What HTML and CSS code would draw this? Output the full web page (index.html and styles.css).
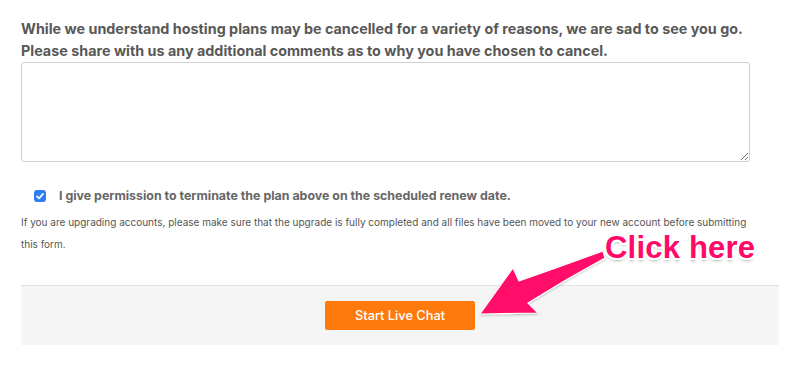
FILE: index.html
```html
<!DOCTYPE html>
<html>
<head>
<meta charset="utf-8">
<link rel="stylesheet" href="styles.css">
</head>
<body>
<div class="page">
  <form class="form">
    <p class="intro">While we understand hosting plans may be cancelled for a variety of reasons, we are sad to see you go.<br>Please share with us any additional comments as to why you have chosen to cancel.</p>
    <textarea class="comments"></textarea>
    <label class="consent">
      <span class="check"><svg width="12" height="12" viewBox="0 0 12 12"><path d="M3 6.3 L5.1 8.4 L9 3.9" fill="none" stroke="#fff" stroke-width="1.7" stroke-linecap="round" stroke-linejoin="round"/></svg></span>
      <span class="consent-text">I give permission to terminate the plan above on the scheduled renew date.</span>
    </label>
    <p class="note">If you are upgrading accounts, please make sure that the upgrade is fully completed and all files have been moved to your new account before submitting<br>this form.</p>
    <div class="footer">
      <button type="button" class="chat-btn">Start Live Chat</button>
    </div>
  </form>
  <div class="annotation">
    <svg class="arrow" width="809" height="366" viewBox="0 0 809 366">
      <defs>
        <filter id="sh" x="-20%" y="-20%" width="140%" height="140%">
          <feDropShadow dx="0" dy="1" stdDeviation="1.2" flood-color="#000" flood-opacity="0.25"/>
        </filter>
      </defs>
      <path d="M603,251 Q562,266 519,281 L513,268 L480,314 L538,313 L528,303 Q566,279 605,258 Z" fill="#ff0a68" stroke="#fff" stroke-width="1.2" stroke-linejoin="round" filter="url(#sh)"/>
    </svg>
    <span class="callout">Click here</span>
  </div>
</div>
</body>
</html>
```
FILE: styles.css
```css
html, body {
  margin: 0;
  padding: 0;
  background: #fff;
}
.page {
  position: relative;
  width: 809px;
  height: 366px;
  overflow: hidden;
}
.form {
  padding: 18px 30px 0 21px;
  font-family: Inter, "Liberation Sans", sans-serif;
  color: #555;
}
.intro {
  margin: 0;
  font-size: 14.35px;
  font-weight: 700;
  line-height: 22px;
  color: #585858;
}
.comments {
  display: block;
  box-sizing: border-box;
  width: 729px;
  height: 100px;
  margin: 0;
  border: 1px solid #cfcfcf;
  border-radius: 3px;
  resize: vertical;
}
.consent {
  display: flex;
  align-items: center;
  margin: 26px 0 0 13px;
}
.check {
  display: flex;
  align-items: center;
  justify-content: center;
  width: 12px;
  height: 12px;
  background: #2e7cf6;
  border-radius: 3px;
}
.consent-text {
  margin-left: 13px;
  font-size: 12.4px;
  font-weight: 700;
  color: #666;
}
.note {
  margin: 8px 0 0;
  font-size: 10px;
  line-height: 22px;
  color: #555;
  white-space: nowrap;
}
.footer {
  margin-top: 30px;
  width: 758px;
  height: 60px;
  box-sizing: border-box;
  background: #f5f5f5;
  border-top: 1px solid #e2e2e2;
  display: flex;
  justify-content: center;
  padding-top: 15px;
}
.chat-btn {
  width: 150px;
  height: 29px;
  background: #ff7a0c;
  border: none;
  border-radius: 2px;
  color: #fff;
  font-family: Inter, "Liberation Sans", sans-serif;
  font-size: 12.8px;
  font-weight: 500;
}
.annotation {
  position: absolute;
  inset: 0;
  pointer-events: none;
}
.arrow {
  position: absolute;
  left: 0;
  top: 0;
}
.callout {
  position: absolute;
  left: 605px;
  top: 230px;
  font-family: "Liberation Sans", Arial, sans-serif;
  font-weight: 700;
  font-size: 31px;
  letter-spacing: 0.2px;
  color: #ff0a68;
  text-shadow: -2px 0 0 #fff, 2px 0 0 #fff, 0 -2px 0 #fff, 0 2px 0 #fff, -1.5px -1.5px 0 #fff, 1.5px -1.5px 0 #fff, -1.5px 1.5px 0 #fff, 1.5px 1.5px 0 #fff, 0 3px 3px rgba(0,0,0,0.3);
}
```
